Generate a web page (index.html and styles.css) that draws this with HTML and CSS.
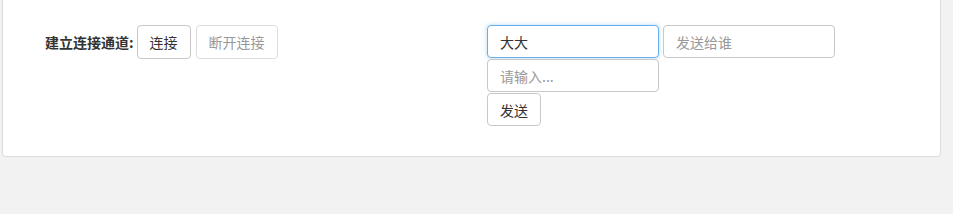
FILE: index.html
```html
<!DOCTYPE html>
<html lang="zh-CN">
<head>
    <meta charset="UTF-8">
    <meta name="viewport" content="width=device-width, initial-scale=1.0">
    <title>WebSocket</title>
    <link rel="stylesheet" href="styles.css">
</head>
<body>
    <div class="panel">
        <div class="row">
            <div class="connect">
                <label class="label">建立连接通道:</label>
                <button class="btn">连接</button>
                <button class="btn" disabled>断开连接</button>
            </div>
            <div class="send">
                <div class="line">
                    <input class="input focus" type="text" value="大大">
                    <input class="input" type="text" placeholder="发送给谁">
                </div>
                <div class="line">
                    <input class="input" type="text" placeholder="请输入...">
                </div>
                <div class="line">
                    <button class="btn small">发送</button>
                </div>
            </div>
        </div>
    </div>
</body>
</html>
```

FILE: styles.css
```css
*{
    padding: 0px;
    margin: 0px;
    box-sizing: border-box;
}
body{
    background-color: #f2f2f2;
    font-family: "Noto Sans CJK SC", "Liberation Sans", sans-serif;
    font-size: 14px;
    color: #333;
}
.panel{
    margin: 0px 12px 0px 2px;
    height: 157px;
    background-color: #fff;
    border: 1px solid #dcdcdc;
    border-top: 0px;
    border-radius: 0px 0px 4px 4px;
    padding-top: 25px;
}
.row{
    display: flex;
}
.connect{
    width: 484px;
    padding-left: 42px;
    display: flex;
    align-items: center;
    align-self: flex-start;
    gap: 5px;
}
.label{
    font-weight: bold;
    margin-right: -2px;
}
.btn{
    height: 34px;
    padding: 0px 12px;
    font-family: inherit;
    font-size: 14px;
    color: #333;
    background-color: #fff;
    border: 1px solid #c8c8c8;
    border-radius: 4px;
    cursor: pointer;
}
.btn.small{
    height: 33px;
}
.btn:disabled{
    color: #999;
    border-color: #ddd;
    cursor: not-allowed;
}
.send{
    display: flex;
    flex-direction: column;
    gap: 1px;
}
.line{
    display: flex;
    gap: 4px;
}
.input{
    width: 172px;
    height: 33px;
    padding: 0px 12px;
    font-family: inherit;
    font-size: 14px;
    color: #333;
    border: 1px solid #c8c8c8;
    border-radius: 4px;
    outline: none;
}
.input::placeholder{
    color: #999;
}
.input.focus{
    border-color: #66afe9;
    box-shadow: 0 0 4px rgba(102, 175, 233, .5);
}
```
